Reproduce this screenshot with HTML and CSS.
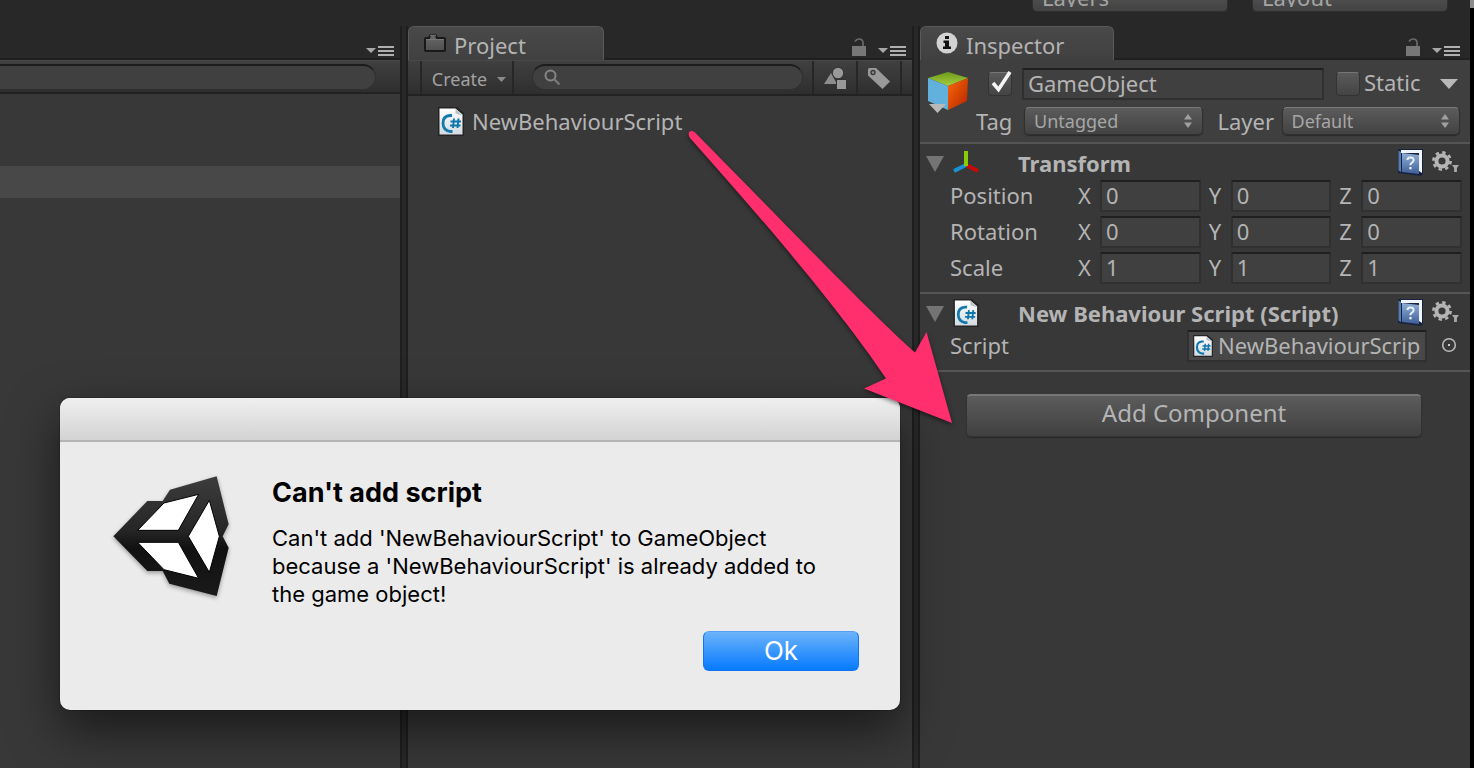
FILE: index.html
```html
<!DOCTYPE html>
<html lang="en">
<head>
<meta charset="utf-8">
<title>Unity Editor</title>
<link rel="stylesheet" href="styles.css">
</head>
<body>
<svg class="defs" aria-hidden="true">
  <defs>
    <linearGradient id="paper" x1="0" y1="0" x2="0" y2="1"><stop offset="0" stop-color="#fdfdfd"/><stop offset="1" stop-color="#d3dbe0"/></linearGradient>
    <linearGradient id="book" x1="0" y1="0" x2="0" y2="1"><stop offset="0" stop-color="#8fb0d8"/><stop offset="1" stop-color="#3f6098"/></linearGradient>
    <linearGradient id="unity" x1="0" y1="0" x2="0" y2="1"><stop offset="0" stop-color="#3c3c3c"/><stop offset=".45" stop-color="#262626"/><stop offset=".6" stop-color="#111"/><stop offset="1" stop-color="#1a1a1a"/></linearGradient>
    <linearGradient id="cubetop" x1="0" y1="0" x2="0" y2="1"><stop offset="0" stop-color="#6d9a1c"/><stop offset="1" stop-color="#a6cf3c"/></linearGradient>
    <linearGradient id="cuberight" x1="0" y1="0" x2="1" y2="1"><stop offset="0" stop-color="#fb6a08"/><stop offset="1" stop-color="#b52200"/></linearGradient>
    <linearGradient id="folder" x1="0" y1="0" x2="0" y2="1"><stop offset="0" stop-color="#6a6a6a"/><stop offset="1" stop-color="#4e4e4e"/></linearGradient>
  </defs>
  <symbol id="i-menu" viewBox="0 0 28 12"><path d="M0 3h10L5 8z" fill="#a8a8a8"/><path d="M12 1h16v2H12zM12 5h16v2H12zM12 9h16v2H12z" fill="#b0b0b0"/></symbol>
  <symbol id="i-lock" viewBox="0 0 14 18"><path d="M0 8h14v10H0z" fill="#777"/><path d="M3 3.500Q4.500 1 7 1q4 0 4 4v3" fill="none" stroke="#6b6b6b" stroke-width="1.700"/></symbol>
  <symbol id="i-csharp" viewBox="0 0 26 29"><path d="M0 0h19l7 6v23H0z" fill="#242424"/><path d="M1.500 1.500h16l7 6v20h-23z" fill="url(#paper)"/><path d="M17.500 1.500v5l7 2z" fill="#b9c3c9"/><path d="M14 8.500H12Q5 9 5 16t7 8.500h2.500" fill="none" stroke="#1279ad" stroke-width="2.800"/><path d="M16 11.500l-1 9.500M20.500 11.500l-1 9.500M12.500 14.500H23M12 18.500h10.500" stroke="#0f76ac" stroke-width="1.900"/></symbol>
  <symbol id="i-help" viewBox="0 0 26 28"><path d="M1 1h25v25l-2 2L1 25z" fill="#17233f"/><path d="M4 2h21v23l-3-2V5H4z" fill="#f1f4f9"/><path d="M1.500 2.500L4 4v20l-2.500-1.500z" fill="#5b7cae"/><path d="M5 5l17 2v19L5 24z" fill="url(#book)"/><path d="M10.300 12q.4-2.700 3.300-2.500 3.200.2 3 2.800-.2 1.600-1.700 2.400-1.500.8-1.500 2.500" fill="none" stroke="#e8f0fa" stroke-width="2"/><path d="M12.300 19h2.300v2.300h-2.300z" fill="#e8f0fa"/></symbol>
  <symbol id="i-gear" viewBox="0 0 27 22"><circle cx="10" cy="10" r="5.600" fill="none" stroke="#b5b5b5" stroke-width="4"/><circle cx="10" cy="10" r="8.600" fill="none" stroke="#b5b5b5" stroke-width="2.600" stroke-dasharray="3.400 3.354"/><path d="M20 14h7l-2.100 3v4h-2.800v-4z" fill="#aaa"/></symbol>
  <symbol id="i-updown" viewBox="0 0 8 16"><path d="M4 1l4 5.500H0zM4 15l4-5.500H0z" fill="#a0a0a0"/></symbol>
  <symbol id="i-down" viewBox="0 0 18 10" preserveAspectRatio="none"><path d="M0 0h18L9 10z" fill="currentColor"/></symbol>
</svg>

<div class="window">
  <main class="editor">
    <header class="topbar">
      <select class="popup" aria-label="Layers"><option>Layers</option></select>
      <select class="popup" aria-label="Layout"><option>Layout</option></select>
    </header>

    <div class="panes">
      <section class="pane hierarchy" aria-label="Hierarchy">
        <div class="tabs"><button class="icon-button" aria-label="Hierarchy menu"><svg class="menu-icon"><use href="#i-menu"/></svg></button></div>
        <div class="toolbar"><input class="search" type="search" aria-label="Search hierarchy"></div>
        <div class="rows"><div class="row-selected"></div></div>
      </section>

      <section class="pane project" aria-label="Project">
        <div class="tabs">
          <h2 class="tab"><svg class="folder-icon" viewBox="0 0 22 18"><path d="M1 5q0-1 1-1h3l1.500-3h5L13 4h7q1 0 1 1v11q0 1-1 1H2q-1 0-1-1z" fill="url(#folder)" stroke="#191919" stroke-width="2"/><path d="M6 1.500h6" stroke="#6f6f6f" stroke-width="1.500"/><path d="M2 5.500h18" stroke="#777"/></svg>Project</h2>
          <button class="icon-button" aria-label="Lock project"><svg class="lock-icon"><use href="#i-lock"/></svg></button>
          <button class="icon-button" aria-label="Project menu"><svg class="menu-icon"><use href="#i-menu"/></svg></button>
        </div>
        <div class="toolbar">
          <button class="tool create">Create<svg class="tiny-arrow"><use href="#i-down"/></svg></button>
          <label class="search-box">
            <svg class="search-icon" viewBox="0 0 17 17"><circle cx="6.500" cy="6.500" r="5" fill="none" stroke="#858585" stroke-width="2"/><path d="M10.500 10.500l5 5" stroke="#777" stroke-width="2.400"/></svg>
            <input class="search" type="search" aria-label="Search project">
          </label>
          <button class="tool square" aria-label="Search by type"><svg class="tool-icon" viewBox="0 0 22 22"><path d="M0 17L7 6l6 11z" fill="#8d8d8d"/><circle cx="14" cy="6" r="6" fill="#323232"/><circle cx="14" cy="6" r="5.200" fill="#999"/><path d="M12 12h10v10H12z" fill="#323232"/><path d="M13 13h9v9h-9z" fill="#999"/></svg></button>
          <button class="tool square" aria-label="Search by label"><svg class="tool-icon" viewBox="0 0 22 22"><path d="M0 2.500Q0 1 1.500 1H8l14 13.500-7.500 7.500L0 8.500z" fill="#999"/><circle cx="5" cy="5.500" r="2" fill="#8a8a8a" stroke="#3a3a3a" stroke-width="1.400"/></svg></button>
        </div>
        <ul class="assets"><li class="asset"><svg class="script-icon"><use href="#i-csharp"/></svg>NewBehaviourScript</li></ul>
      </section>

      <section class="pane inspector" aria-label="Inspector">
        <div class="tabs">
          <h2 class="tab"><svg class="info-icon" viewBox="0 0 22 22"><circle cx="11" cy="11" r="10.500" fill="#d2d2d2"/><path d="M9 4h4v3H9zM7.500 8.500H13v6h2V17H7v-2.500h2V11H7.500z" fill="#111"/></svg>Inspector</h2>
          <button class="icon-button" aria-label="Lock inspector"><svg class="lock-icon"><use href="#i-lock"/></svg></button>
          <button class="icon-button" aria-label="Inspector menu"><svg class="menu-icon"><use href="#i-menu"/></svg></button>
        </div>

        <div class="object-header">
          <svg class="cube-icon" viewBox="0 0 42 42"><path d="M1 8l20-6 20 6-20 8z" fill="url(#cubetop)"/><path d="M1 8l20 8v24L1 31z" fill="#62b1dc"/><path d="M41 8l-20 8v24l19-9z" fill="url(#cuberight)"/><path d="M2 34h17l-8.500 9z" fill="#b9b9b9"/></svg>
          <div class="object-fields">
            <div class="object-row name-row">
              <span class="check"><input type="checkbox" checked aria-label="Active"><svg class="tick" viewBox="0 0 24 24"><path d="M5 11l5.500 6.500L22 0" fill="none" stroke="#f4f4f4" stroke-width="3.600"/></svg></span>
              <input class="field name" type="text" value="GameObject" aria-label="Name">
              <label class="static-label"><span class="check"><input type="checkbox"></span>Static</label>
              <button class="icon-button static-menu" aria-label="Static options"><svg class="down-icon"><use href="#i-down"/></svg></button>
            </div>
            <div class="object-row">
              <label class="tag-label" for="tag">Tag</label>
              <span class="select"><select class="popup" id="tag"><option>Untagged</option></select><svg class="updown"><use href="#i-updown"/></svg></span>
              <label class="layer-label" for="layer">Layer</label>
              <span class="select"><select class="popup" id="layer"><option>Default</option></select><svg class="updown"><use href="#i-updown"/></svg></span>
            </div>
          </div>
        </div>

        <section class="component">
          <div class="component-head">
            <svg class="fold"><use href="#i-down"/></svg>
            <svg class="component-icon" viewBox="0 0 28 28"><path d="M14 16l12 6" stroke="#cc0808" stroke-width="4"/><path d="M14 16L2 22" stroke="#1a91d4" stroke-width="4"/><path d="M14 2v15" stroke="#8acb05" stroke-width="4"/></svg>
            <h3>Transform</h3>
            <button class="icon-button" aria-label="Transform help"><svg class="help-icon"><use href="#i-help"/></svg></button>
            <button class="icon-button" aria-label="Transform options"><svg class="gear-icon"><use href="#i-gear"/></svg></button>
          </div>
          <div class="vectors">
            <span>Position</span><label for="px">X</label><input class="field" id="px" value="0"><label for="py">Y</label><input class="field" id="py" value="0"><label for="pz">Z</label><input class="field" id="pz" value="0">
            <span>Rotation</span><label for="rx">X</label><input class="field" id="rx" value="0"><label for="ry">Y</label><input class="field" id="ry" value="0"><label for="rz">Z</label><input class="field" id="rz" value="0">
            <span>Scale</span><label for="sx">X</label><input class="field" id="sx" value="1"><label for="sy">Y</label><input class="field" id="sy" value="1"><label for="sz">Z</label><input class="field" id="sz" value="1">
          </div>
        </section>

        <section class="component">
          <div class="component-head">
            <svg class="fold"><use href="#i-down"/></svg>
            <svg class="component-icon"><use href="#i-csharp"/></svg>
            <h3>New Behaviour Script (Script)</h3>
            <button class="icon-button" aria-label="Script help"><svg class="help-icon"><use href="#i-help"/></svg></button>
            <button class="icon-button" aria-label="Script options"><svg class="gear-icon"><use href="#i-gear"/></svg></button>
          </div>
          <div class="script-row">
            <label for="script">Script</label>
            <button class="field object-field" id="script"><svg class="mini-script"><use href="#i-csharp"/></svg><span>NewBehaviourScrip</span></button>
            <button class="icon-button" aria-label="Select script"><svg class="target-icon" viewBox="0 0 16 16"><circle cx="8" cy="8" r="6.300" fill="none" stroke="#b8b8b8" stroke-width="1.600"/><path d="M7 7h2v2H7z" fill="#ccc"/></svg></button>
          </div>
        </section>

        <button class="add-component">Add Component</button>
      </section>
    </div>
  </main>
  <div class="desktop-edge"></div>
</div>

<div class="dialog" role="alertdialog" aria-labelledby="dialog-title" aria-describedby="dialog-text">
  <div class="titlebar"></div>
  <div class="dialog-body">
    <svg class="unity-logo" viewBox="66 74 354 372"><path d="M70 258L172 152H218L240 118 380 78 416 222 398 258 416 292 380 437 238 400 218 362H172z" fill="url(#unity)"/><path d="M143 240L222 158 326 132 265 240zM143 276H265L326 384 222 358zM295 258L358 150 388 258 358 366z" fill="#fff" stroke="#000" stroke-width="3"/></svg>
    <div class="message">
      <h1 id="dialog-title">Can't add script</h1>
      <p id="dialog-text">Can't add 'NewBehaviourScript' to GameObject because a 'NewBehaviourScript' is already added to the game object!</p>
    </div>
  </div>
  <div class="actions"><button class="ok">Ok</button></div>
</div>

<svg class="arrow" viewBox="0 0 270 300" aria-hidden="true"><path d="M16 13.500C80 78 185 188 235 232.500L246.500 212 272 303 184 268.500 206 258.500C160 190 85 102 10 18 6 11 12 9 16 13.500z" fill="#ff2f6e"/></svg>
</body>
</html>
```

FILE: styles.css
```css
* { box-sizing: border-box; }

body {
  margin: 0;
  background: #282828;
  color: #b4b4b4;
  font: 22px/30px "Noto Sans", "Open Sans", sans-serif;
}

h1, h2, h3, p, ul { margin: 0; padding: 0; }
ul { list-style: none; }
svg { display: block; flex: none; }
button, input, select { font: inherit; color: inherit; margin: 0; }

.defs { position: absolute; width: 0; height: 0; }

.window { display: flex; min-height: 100vh; }
.editor { flex: 1; min-width: 0; display: flex; flex-direction: column; background: #282828; }
.desktop-edge { width: 4px; background: linear-gradient(#8c8c8c 8px, #000 8px); }

.popup {
  appearance: none;
  height: 28px;
  width: 100%;
  padding: 0 9px;
  border: 1px solid #303030;
  border-top-color: #7a7a7a;
  border-radius: 5px;
  background: linear-gradient(#5c5c5c, #424242);
  box-shadow: 0 1px 1px #2a2a2a;
  font-size: 18px;
  line-height: 24px;
  color: #a6a6a6;
}

.topbar {
  height: 12px;
  margin-bottom: 14px;
  padding-right: 22px;
  display: flex;
  justify-content: flex-end;
  align-items: flex-end;
  gap: 24px;
  overflow: hidden;
}
.topbar .popup { width: 196px; flex: none; padding-bottom: 4px; font-size: 22px; }

.panes {
  flex: 1;
  display: grid;
  grid-template-columns: 402fr 508fr 552fr;
  gap: 4px;
}

.pane {
  min-width: 0;
  border: 0 solid #1e1e1e;
  border-width: 0 2px;
  background: linear-gradient(#282828 34px, #383838 34px);
}
.hierarchy { border-left: 0; }
.inspector { border-right: 0; }

.tabs {
  height: 34px;
  padding-right: 6px;
  display: flex;
  align-items: flex-end;
  justify-content: flex-end;
  box-shadow: inset 0 -2px #1f1f1f;
}
.inspector .tabs { padding-right: 10px; }

.tab {
  width: 196px;
  height: 34px;
  margin-right: auto;
  padding: 2px 15px 0;
  display: flex;
  align-items: center;
  gap: 8px;
  border: 1px solid #5a5a5a;
  border-bottom: 0;
  border-radius: 6px 6px 0 0;
  background: linear-gradient(#494949, #404040);
  font-size: 22px;
  font-weight: 400;
}
.inspector .tab { width: 194px; }

.icon-button { padding: 0; border: 0; background: none; display: flex; }
.menu-icon { width: 28px; height: 12px; margin-bottom: 3px; }
.lock-icon { width: 14px; height: 18px; margin: 0 12px 4px 0; }
.folder-icon { width: 22px; height: 18px; margin-bottom: 4px; }
.info-icon { width: 22px; height: 22px; margin-bottom: 4px; }

.toolbar {
  height: 36px;
  display: flex;
  align-items: flex-start;
  border-top: 1px solid #484848;
  border-bottom: 2px solid #222;
  background: linear-gradient(#404040, #2e2e2e);
}
.hierarchy .toolbar { height: 34px; padding-right: 24px; }
.project .toolbar { padding: 0 10px 0 12px; }

.search {
  flex: 1;
  width: 100%;
  min-width: 0;
  height: 26px;
  margin-top: 3px;
  padding: 0 14px 0 36px;
  border: 1px solid #303030;
  border-top: 2px solid #1c1c1c;
  border-radius: 13px;
  background: #404040;
  font-size: 18px;
  outline: 0;
}
.hierarchy .search { border-radius: 0 13px 13px 0; border-left: 0; }
.search-box { flex: 1; display: grid; margin: 0 9px 0 18px; }
.search-box > * { grid-area: 1 / 1; }
.search-icon { width: 17px; height: 17px; margin: 8px 0 0 12px; z-index: 1; }

.tool {
  height: 33px;
  padding: 0;
  display: flex;
  align-items: center;
  justify-content: center;
  border: 0 solid #262626;
  border-left-width: 2px;
  background: none;
  font-size: 18px;
  color: #a2a2a2;
}
.create { width: 94px; gap: 10px; padding: 2px 0 0 4px; border-right-width: 2px; }
.square { width: 44px; }
.square:last-child { width: 46px; border-right-width: 2px; }
.tool-icon { width: 22px; height: 22px; }
.tiny-arrow { width: 9px; height: 5px; margin-top: 2px; color: #8a8a8a; }

.row-selected { height: 32px; margin-top: 72px; background: #484848; }
.assets { padding: 10px 30px; }
.asset { display: flex; align-items: center; gap: 8px; }
.script-icon { width: 26px; height: 29px; }

.object-header {
  display: flex;
  gap: 7px;
  padding: 8px 10px 6px 7px;
  border-bottom: 2px solid #555;
  background: #3f3f3f;
}
.cube-icon { width: 42px; height: 42px; margin-top: 2px; overflow: visible; }
.object-fields { flex: 1; min-width: 0; display: grid; gap: 6px; line-height: 28px; }
.object-row { display: flex; align-items: center; min-height: 30px; }
.name-row { padding-left: 12px; }
.tag-label { width: 48px; }
.layer-label { width: 79px; padding-left: 15px; }

.field {
  width: 100%;
  min-width: 0;
  height: 32px;
  padding: 0 4px 2px;
  border: 2px solid #303030;
  border-top-color: #1f1f1f;
  border-radius: 0;
  background: #404040;
  outline: 0;
}
.name { flex: 1; margin: 0 12px 0 10px; }

.check { display: grid; width: 24px; height: 24px; }
.check > * { grid-area: 1 / 1; }
.check input {
  appearance: none;
  width: 24px;
  height: 24px;
  border: 1px solid #333;
  border-top-color: #777;
  border-radius: 4px;
  background: linear-gradient(#5a5a5a, #444);
}
.tick { width: 24px; height: 24px; overflow: visible; pointer-events: none; z-index: 1; }
.static-label { display: flex; align-items: center; gap: 4px; width: 104px; padding-bottom: 4px; }
.static-label .check { margin-top: 4px; }
.static-menu { padding-right: 2px; color: #b9b9b9; }
.down-icon { width: 18px; height: 10px; }

.select { flex: 1; display: grid; align-items: center; }
.select > * { grid-area: 1 / 1; }
.updown { width: 8px; height: 16px; justify-self: end; margin-right: 11px; pointer-events: none; }

.component { padding-bottom: 8px; border-bottom: 2px solid #555; }
.component-head { height: 36px; padding: 0 11px 0 6px; display: flex; align-items: center; }
.component-head h3 { flex: 1; margin: 2px 0 0 38px; font-size: 22px; font-weight: 700; white-space: nowrap; }
.fold { width: 18px; height: 16px; margin: 4px 8px 0 0; color: #747474; }
.component-icon { width: 28px; height: 28px; margin-top: 1px; }
.help-icon { width: 26px; height: 28px; margin-right: 9px; }
.gear-icon { width: 27px; height: 22px; margin-bottom: 1px; }

.vectors {
  display: grid;
  grid-template-columns: 128px 22px 1fr 30px 1fr 30px 1fr;
  row-gap: 4px;
  padding: 0 8px 0 30px;
}
.vectors label { padding-left: 8px; }
.vectors label:nth-of-type(3n + 1) { padding-left: 0; }

.script-row { display: flex; align-items: flex-start; padding: 0 13px 0 30px; }
.script-row label { flex: 1; }
.script-row .icon-button { margin-top: 7px; }
.object-field {
  width: 240px;
  margin-right: 14px;
  padding: 0 2px 0 4px;
  display: flex;
  align-items: center;
  gap: 5px;
  background: #484848;
  line-height: 28px;
  overflow: hidden;
}
.object-field span { overflow: hidden; height: 30px; }
.mini-script { width: 20px; height: 22px; }
.target-icon { width: 16px; height: 16px; }

.add-component {
  display: block;
  width: calc(100% - 94px);
  height: 43px;
  margin: 22px 0 0 46px;
  padding: 0 0 6px;
  border: 1px solid #333;
  border-top: 2px solid #777;
  border-radius: 5px;
  background: linear-gradient(#5c5c5c, #404040);
  box-shadow: 0 1px 1px #2a2a2a;
  font-size: 24px;
  line-height: 32px;
}

.dialog {
  position: absolute;
  left: 60px;
  top: 398px;
  width: 840px;
  padding-bottom: 39px;
  border-radius: 10px;
  background: #ebebeb;
  box-shadow: 0 20px 50px rgba(0, 0, 0, .55), 0 0 2px rgba(0, 0, 0, .5);
  color: #000;
  font-family: Inter, "Liberation Sans", Arial, sans-serif;
}
.titlebar {
  height: 44px;
  border-bottom: 2px solid #b4b4b4;
  border-radius: 10px 10px 0 0;
  background: linear-gradient(#efefef, #d3d3d3);
}
.dialog-body { display: flex; gap: 42px; padding: 33px 60px 0 52px; }
.unity-logo { width: 118px; height: 124px; filter: drop-shadow(0 2px 2px rgba(0, 0, 0, .35)); }
.message h1 { font-size: 27px; line-height: 36px; margin-bottom: 13px; }
.message p { font-size: 22px; line-height: 28px; }
.actions { display: flex; justify-content: flex-end; padding: 23px 41px 0 0; }
.ok {
  width: 156px;
  height: 40px;
  padding: 0;
  border: 1px solid #1273f5;
  border-top-color: #569ff0;
  border-radius: 6px;
  background: linear-gradient(#6cb3fa, #067aff);
  color: #fff;
  font-size: 26px;
  line-height: 36px;
}

.arrow {
  position: absolute;
  left: 680px;
  top: 120px;
  width: 270px;
  height: 300px;
  overflow: visible;
  pointer-events: none;
  filter: drop-shadow(0 2px 2px rgba(0, 0, 0, .5));
}
```
